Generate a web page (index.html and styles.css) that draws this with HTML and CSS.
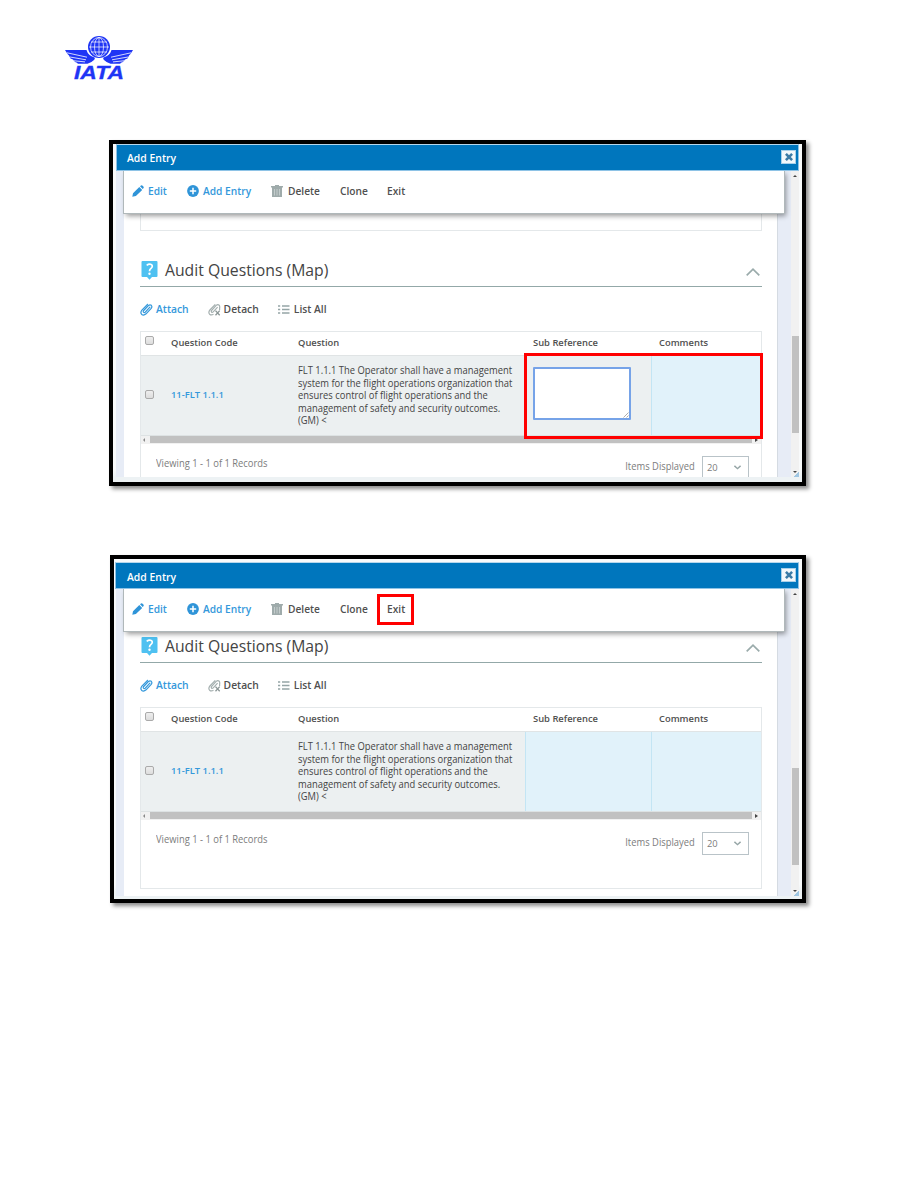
FILE: index.html
```
<!DOCTYPE html>
<html lang="en">
<head>
<meta charset="utf-8">
<title>Add Entry</title>
<link rel="stylesheet" href="styles.css">
</head>
<body>
<svg class="defs" width="0" height="0" aria-hidden="true">
  <symbol id="pencil" viewBox="0 0 12 12"><path d="M.3 11.8 1 8.2 7.300 2 10.200 4.900 3.900 11ZM8 1.300 9 .4Q9.700 0 10.300 .5L11.600 1.800Q12 2.400 11.600 3L10.700 4Z" fill="#2f94d8"/></symbol>
  <symbol id="plus" viewBox="0 0 12 12"><circle cx="6" cy="6" r="5.900" fill="#2f94d8"/><path d="M6 2.800V9.200M2.800 6H9.200" stroke="#fff" stroke-width="1.500"/></symbol>
  <symbol id="trash" viewBox="0 0 12 12"><path d="M0 1H4V0H8V1H12V2.600H0ZM1 2.600H11V12H1Z" fill="#9fabab"/><path d="M3.500 4V10.500M6 4V10.500M8.500 4V10.500" stroke="#cdd4d4" stroke-width=".8"/></symbol>
  <symbol id="help" viewBox="0 0 17 19"><path d="M1.500 0H15.500Q16.500 0 16.500 1V15Q16.500 16 15.500 16H11L8.500 18.700 6 16H1.500Q.5 16 .5 15V1Q.5 0 1.500 0Z" fill="#4fc1f1"/><path d="M5.700 4.300Q8.300 2.200 10.500 3.600 12.300 5.400 10 7.400 8.500 8.500 8.500 10.200" fill="none" stroke="#fff" stroke-width="1.700"/><circle cx="8.500" cy="12.800" r="1.200" fill="#fff"/></symbol>
  <symbol id="clip" viewBox="0 0 13 13"><path d="M9.900 4.200 5.200 9.200Q4.200 9.900 3.500 9.200 2.900 8.400 3.700 7.500L8.400 2.500Q10 1.200 11.300 2.300 12.500 3.700 11.200 5.400L6.100 10.800Q3.700 12.900 1.700 11.400 0 9.400 1.900 7.100L7.500 1.300" fill="none" stroke="currentColor" stroke-width="1.200" stroke-linecap="round"/></symbol>
  <symbol id="unclip" viewBox="0 0 13 13"><path d="M9.600 4.200 5.200 8.900Q4.200 9.700 3.500 9 2.900 8.200 3.700 7.300L8.200 2.400Q9.800 1 11.200 2.200 12 3.200 11.600 5.300M5.500 11.200Q3.200 12.600 1.600 11.200 0 9.300 1.900 7L7.300 1.300M11.600 4.500V7" fill="none" stroke="#a5b0b0" stroke-width="1.200"/><path d="M7.500 7.600 11.700 12.300M11.700 7.600 7.500 12.300" stroke="#8b9696" stroke-width="1.300"/></symbol>
  <symbol id="list" viewBox="0 0 12 9"><path d="M0 1H2.200M0 4.500H2.200M0 8H2.200M4 1H11.500M4 4.500H11.500M4 8H11.500" stroke="#95a5a6" stroke-width="1.300"/></symbol>
  <symbol id="collapse" viewBox="0 0 14 8"><path d="M.7 7.300 7 1.200 13.300 7.300" fill="none" stroke="#9aabab" stroke-width="1.700"/></symbol>
  <symbol id="chevron" viewBox="0 0 6 4"><path d="M.4 .6 3 3 5.600 .6" fill="none" stroke="#95a5a6" stroke-width="1.200"/></symbol>
  <symbol id="close" viewBox="0 0 7 7"><path d="M.8 .8 6.200 6.200M6.200 .8 .8 6.200" stroke="#3c7ba6" stroke-width="2.300"/></symbol>
</svg>

<header class="brand">
  <svg class="logo" width="70" height="46" viewBox="0 0 70 46" role="img" aria-label="IATA">
    <path d="M1 15H22.500Q24 20.500 30.500 22.500 31.500 23.500 30 25 27 28 23.500 28.800H14L12.500 27.500 11 27 9 24.500 6.500 23.500 5 20.500 3.500 19Z" fill="#1f35f5"/>
    <path d="M69 15H47.500Q46 20.500 39.500 22.500 38.500 23.500 40 25 43 28 46.500 28.800H56L57.500 27.500 59 27 61 24.500 63.500 23.500 65 20.500 66.500 19Z" fill="#1f35f5"/>
    <path d="M3 17.800 23 22.200M6 22 22 24.800M10 25.800 21 26.900M67 17.800 47 22.200M64 22 48 24.800M60 25.800 49 26.900" stroke="#fff" stroke-width=".8"/>
    <circle cx="35" cy="12" r="11" fill="#1f35f5"/>
    <g fill="none" stroke="#fff" stroke-width=".7"><ellipse cx="35" cy="12" rx="4.500" ry="9.500"/><ellipse cx="35" cy="12" rx="8.500" ry="9.500"/><path d="M35 2V22M25 12H45M27 7H43M27 17H43"/></g>
    <text x="10" y="43.500" textLength="50" lengthAdjust="spacingAndGlyphs" class="logo-text">IATA</text>
  </svg>
</header>

<main>
  <section class="dialog first">
    <div class="titlebar"><span>Add Entry</span><button class="close"><svg width="8" height="8"><use href="#close"/></svg></button></div>
    <div class="body">
      <div class="panel">
        <div class="previous"></div>
        <div class="heading"><svg width="17" height="19"><use href="#help"/></svg><h2>Audit Questions (Map)</h2><svg class="collapse" width="14" height="8"><use href="#collapse"/></svg></div>
        <div class="actions"><a class="blue"><svg width="13" height="13"><use href="#clip"/></svg>Attach</a><a><svg width="13" height="13"><use href="#unclip"/></svg>Detach</a><a><svg width="12" height="9"><use href="#list"/></svg>List All</a></div>
        <div class="table">
          <div class="row head"><i class="check"></i><span>Question Code</span><span>Question</span><span class="cell">Sub Reference</span><span class="cell">Comments</span></div>
          <div class="row data"><i class="check"></i><a class="blue code">11-FLT 1.1.1</a><p>FLT 1.1.1 The Operator shall have a management<br>system for the flight operations organization that<br>ensures control of flight operations and the<br>management of safety and security outcomes.<br>(GM) &lt;</p><div class="cell editing"><div class="field"><svg width="6" height="6" viewBox="0 0 6 6"><path d="M.5 5.500 5.500 .5M3.500 5.500 5.500 3.500" stroke="#999" stroke-width=".8"/></svg></div></div><div class="cell empty"></div></div>
          <div class="hscroll"><i class="arrow left"></i><i class="thumb"></i><i class="arrow right"></i></div>
          <div class="footer"><span class="count">Viewing 1 - 1 of 1 Records</span><span class="items">Items Displayed</span><span class="select">20<svg width="7" height="5"><use href="#chevron"/></svg></span></div>
        </div>
      </div>
      <div class="vscroll"><i class="arrow up"></i><i class="thumb"></i><i class="arrow down"></i></div>
      <nav class="toolbar"><a class="blue"><svg width="12" height="12"><use href="#pencil"/></svg>Edit</a><a class="blue"><svg width="12" height="12"><use href="#plus"/></svg>Add Entry</a><a><svg width="12" height="12"><use href="#trash"/></svg>Delete</a><a>Clone</a><a>Exit</a></nav>
      <i class="grip"></i>
      <div class="mark"></div>
    </div>
  </section>

  <section class="dialog second">
    <div class="titlebar"><span>Add Entry</span><button class="close"><svg width="8" height="8"><use href="#close"/></svg></button></div>
    <div class="body">
      <div class="panel">
        <div class="heading"><svg width="17" height="19"><use href="#help"/></svg><h2>Audit Questions (Map)</h2><svg class="collapse" width="14" height="8"><use href="#collapse"/></svg></div>
        <div class="actions"><a class="blue"><svg width="13" height="13"><use href="#clip"/></svg>Attach</a><a><svg width="13" height="13"><use href="#unclip"/></svg>Detach</a><a><svg width="12" height="9"><use href="#list"/></svg>List All</a></div>
        <div class="table">
          <div class="row head"><i class="check"></i><span>Question Code</span><span>Question</span><span class="cell">Sub Reference</span><span class="cell">Comments</span></div>
          <div class="row data"><i class="check"></i><a class="blue code">11-FLT 1.1.1</a><p>FLT 1.1.1 The Operator shall have a management<br>system for the flight operations organization that<br>ensures control of flight operations and the<br>management of safety and security outcomes.<br>(GM) &lt;</p><div class="cell empty"></div><div class="cell empty"></div></div>
          <div class="hscroll"><i class="arrow left"></i><i class="thumb"></i><i class="arrow right"></i></div>
          <div class="footer"><span class="count">Viewing 1 - 1 of 1 Records</span><span class="items">Items Displayed</span><span class="select">20<svg width="7" height="5"><use href="#chevron"/></svg></span></div>
        </div>
      </div>
      <div class="vscroll"><i class="arrow up"></i><i class="thumb"></i><i class="arrow down"></i></div>
      <nav class="toolbar"><a class="blue"><svg width="12" height="12"><use href="#pencil"/></svg>Edit</a><a class="blue"><svg width="12" height="12"><use href="#plus"/></svg>Add Entry</a><a><svg width="12" height="12"><use href="#trash"/></svg>Delete</a><a>Clone</a><a>Exit</a></nav>
      <i class="grip"></i>
      <div class="mark"></div>
    </div>
  </section>
</main>
</body>
</html>
```

FILE: styles.css
```
* { box-sizing: border-box; }
body { margin: 0; height: 1188px; background: #fff; color: #505050; font: 600 9.4px/14px "Open Sans", "Noto Sans", sans-serif; overflow: hidden; }
svg { display: block; flex: none; }
.defs { position: absolute; }
.brand { height: 140px; padding: 35px 0 0 64px; }
.logo { overflow: visible; }
.logo-text { font: italic bold 18px "Liberation Sans", sans-serif; fill: #1f35f5; stroke: #1f35f5; stroke-width: .3px; }
.blue { color: #3498db; }

.dialog { width: 697px; height: 346px; margin-left: 109px; border: 4px solid #000; padding: 0 3px; background: linear-gradient(#f8fafb 325px, #edf2f4 333px); box-shadow: 3px 3px 4px rgba(0,0,0,.45); }
.second { width: 696px; height: 348px; margin: 69px 0 0 110px; padding: 3px 3px 0 2px; }
.titlebar { display: flex; align-items: center; justify-content: space-between; height: 27px; padding: 1px 2px 0 10px; background: #0076bd; border: 1px solid #8ec3e6; border-top-color: #b5d7ed; color: #fff; font-size: 10.4px; }
.second .titlebar { padding-left: 11px; margin-left: -1px; }
.second .titlebar span { padding-top: 1px; }
.close { display: grid; place-items: center; width: 15px; height: 14px; margin-bottom: 2px; padding: 0; border: 1px solid #a9d0e9; background: #f3f8fb; }

.body { position: relative; display: flex; justify-content: space-between; height: 306px; padding-left: 8px; background: #e7ecf6; overflow: hidden; }
.second .body { height: 307px; }
.panel { width: 654px; height: 100%; padding: 0 16px; background: #fff; border-right: 1px solid #d5dbe2; overflow: hidden; }
.second .panel { padding-top: 44px; }
.previous { height: 60px; margin-bottom: 26px; border: 1px solid #e4e8ea; border-top: 0; width: 622px; }
.heading { display: flex; align-items: center; width: 622px; height: 30px; border-bottom: 1px solid #93a8a8; padding: 0 0 2px 1px; }
.heading h2 { margin: 0 0 2px 7px; padding-top: 1px; font-size: 15.75px; line-height: 22px; font-weight: 400; color: #444; }
.collapse { margin: 3px 2px 0 auto; }
.actions { display: flex; align-items: center; height: 44px; font-size: 10.3px; }
.actions a { display: flex; align-items: center; gap: 3px; margin-right: 19px; }
.actions a:last-child { gap: 4px; }

.table { width: 622px; height: 182px; border: 1px solid #e4e8ea; }
.row { display: grid; grid-template-columns: 30px 127px 227px 126px 110px; }
.head { height: 24px; align-items: center; padding-bottom: 1px; border-bottom: 1px solid #e0e4e5; }
.head .check { margin-bottom: 5px; }
.cell { padding-left: 8px; }
.data { height: 80px; align-items: center; background: #ecf0f1; border-bottom: 1px solid #dde2e3; }
.code { padding-bottom: 1px; }
/* Taller glyphs at a condensed width for body copy. */
.data p, .count, .items { font-size: 10.5px; font-weight: 400; white-space: nowrap; transform: scaleX(.894); transform-origin: left center; }
.data p { margin: 0; line-height: 12.600px; color: #444; }
.data .cell { height: 79px; }
.empty { background: #e1f2fa; border-left: 1px solid #c3e5f4; }
.editing { padding-top: 11px; }
.field { display: flex; align-items: flex-end; justify-content: flex-end; width: 98px; height: 53px; border: 2px solid #76a3e8; border-radius: 1px; background: #fff; }
.check { width: 9px; height: 9px; margin-left: 4px; border: 1px solid #aaa; border-radius: 2px; background: linear-gradient(#eee, #ddd); }
.data .check { margin-bottom: 2px; }
.hscroll { display: flex; align-items: center; height: 8px; padding: 0 3px 1px 2px; justify-content: space-between; background: #f1f1f1; }
.hscroll .thumb { width: 602px; height: 7px; margin-left: 1px; background: #c1c1c1; }
.arrow { width: 0; height: 0; border: 2px solid transparent; }
.left { border-right-color: #888; border-left: 0; }
.right { border-left: 3px solid #444; border-right: 0; }
.footer { display: flex; height: 48px; padding: 12px 12px 0 15px; font-weight: 400; color: #7c7c7c; }
.items { margin-left: auto; padding-top: 3px; transform-origin: right center; }
.select { display: flex; align-items: center; justify-content: space-between; width: 47px; height: 23px; margin-left: 7px; padding: 0 7px 0 4px; border: 1px solid #b9c3c8; }

.vscroll { display: flex; flex-direction: column; align-items: center; width: 8px; height: 100%; padding: 4px 0; background: #f1f1f1; }
.vscroll .thumb { width: 7px; height: 97px; margin: 159px 0 auto; background: #c1c1c1; }
.second .vscroll .thumb { margin-top: 173px; }
.up { border-bottom-color: #444; border-top: 0; }
.down { border-top-color: #444; border-bottom: 0; }
.grip { position: absolute; right: 0; bottom: 0; width: 6px; height: 6px; background: linear-gradient(135deg, transparent 50%, #9fc6e2 50%); }

/* The toolbar stays above the scrolled panel. */
.toolbar { position: absolute; left: 8px; top: 0; display: grid; grid-template-columns: 55px 84px 69px 47px 40px; align-items: center; width: 660px; height: 42px; padding: 0 0 2px 8px; background: #fff; box-shadow: 0 0 0 1px #b0b8ba, 2px 3px 5px rgba(0,0,0,.4); font-size: 10.2px; }
.toolbar a { display: flex; align-items: center; gap: 4px; white-space: nowrap; }
.toolbar a:nth-child(3) { gap: 5px; }
.mark { position: absolute; left: 408px; top: 182px; width: 239px; height: 86px; border: 3px solid #f00; }
.second .mark { left: 261px; top: 5px; width: 37px; height: 31px; }
```
